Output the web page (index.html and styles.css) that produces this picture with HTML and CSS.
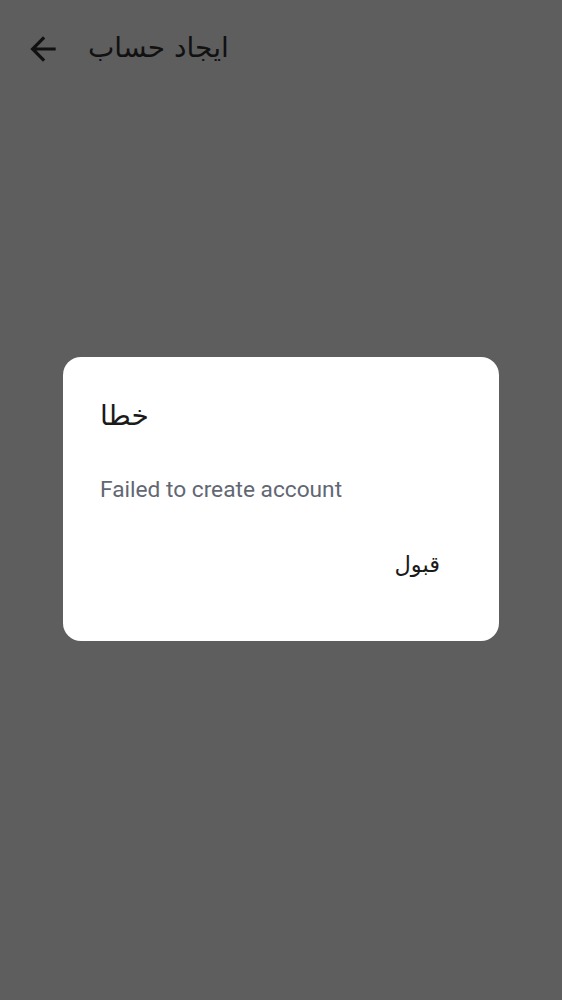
FILE: index.html
```html
<!DOCTYPE html>
<html lang="ar">
<head>
<meta charset="utf-8">
<link rel="stylesheet" href="styles.css">
</head>
<body>
<div class="screen">
  <header class="appbar">
    <span class="back">
      <svg width="38" height="38" viewBox="0 0 24 24"><path d="M20 11H7.83l5.59-5.59L12 4l-8 8 8 8 1.41-1.41L7.83 13H20v-2z" fill="#111"/></svg>
    </span>
    <span class="title">ايجاد حساب</span>
  </header>
  <div class="overlay">
    <div class="dialog">
      <div class="dtitle">خطا</div>
      <div class="dmsg">Failed to create account</div>
      <div class="actions"><span class="btn">قبول</span></div>
    </div>
  </div>
</div>
</body>
</html>
```
FILE: styles.css
```css
html, body { margin: 0; padding: 0; }
body { background: #5e5e5e; font-family: "DejaVu Sans", "Noto Sans", sans-serif; }
.screen { width: 562px; height: 1000px; display: flex; flex-direction: column; }
.appbar { height: 98px; display: flex; align-items: center; padding: 0 0 0 24px; margin-top: -2px; }
.back { width: 38px; height: 38px; display: flex; margin-top: 4px; }
.title { margin-left: 26px; font-size: 28px; color: #111; }
.overlay { flex: 1; display: flex; justify-content: center; align-items: flex-start; padding-top: 261px; }
.dialog { width: 436px; height: 284px; background: #fff; border-radius: 18px; box-sizing: border-box; padding: 38px 37px 0 37px; }
.dtitle { font-size: 28px; color: #1a1a1a; text-align: left; line-height: 42px; }
.dmsg { margin-top: 40px; font-family: Roboto, "Noto Sans", sans-serif; font-size: 22.7px; color: #616773; line-height: 26px; }
.actions { margin-top: 45px; display: flex; justify-content: flex-end; padding-right: 22px; }
.btn { font-size: 22.5px; color: #1a1a1a; line-height: 32px; }
```
